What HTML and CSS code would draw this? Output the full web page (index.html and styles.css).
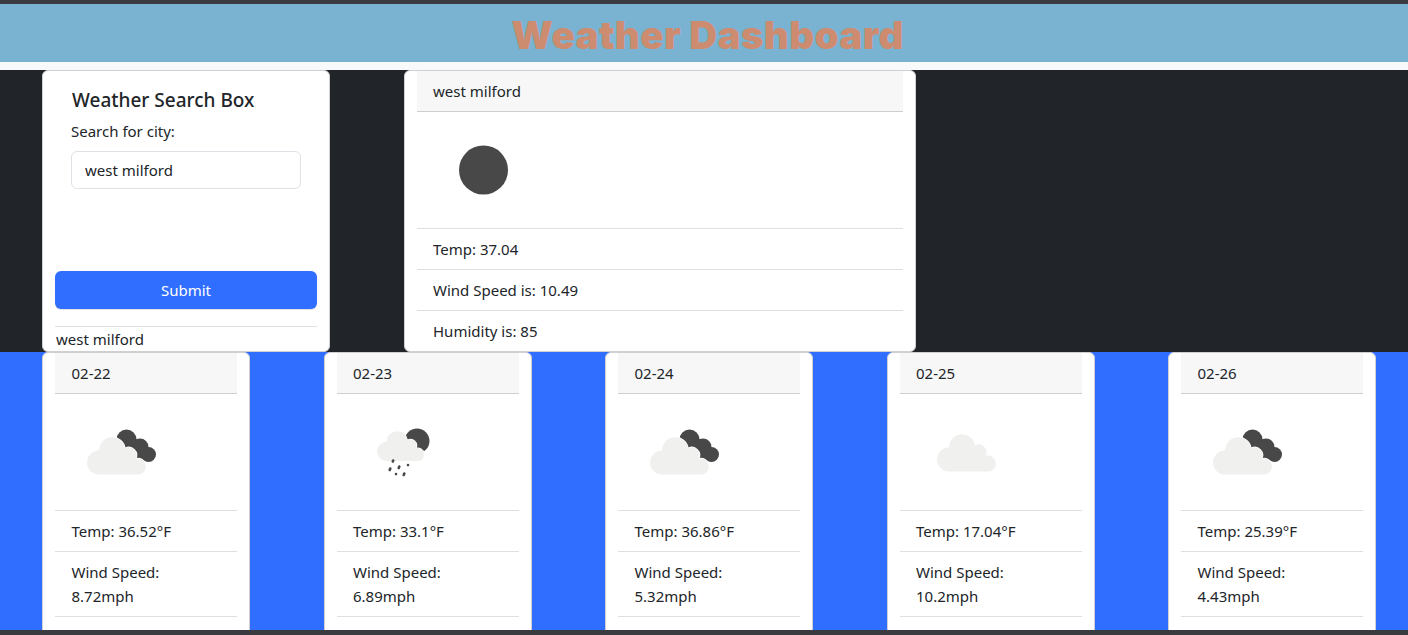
FILE: index.html
```html
<!DOCTYPE html>
<html lang="en">
<head>
    <meta charset="UTF-8">
    <meta name="viewport" content="width=device-width, initial-scale=1.0">
    <title>Weather Dashboard</title>
    <link rel="stylesheet" href="styles.css">
</head>
<body>

<svg class="defs" width="0" height="0">
    <defs>
        <path id="cloud" d="M33 69.5A12 12 0 0 1 33.1 45.5A13 13 0 0 1 59 43.7A7.5 7.5 0 0 1 69.4 53.9A8 8 0 1 1 72 69.5Z"/>
        <g id="cloudy">
            <circle class="dark" cx="55.5" cy="37.5" r="10"/>
            <circle class="dark" cx="69" cy="45" r="8.5"/>
            <circle class="dark" cx="77.5" cy="52.5" r="7.5"/>
            <circle class="dark" cx="62.5" cy="46" r="9"/>
            <circle class="dark" cx="70.5" cy="52" r="7"/>
            <use href="#cloud" class="light outlined" transform="translate(-5 3)"/>
        </g>
    </defs>
</svg>

<header class="title-bar">
    <h1>Weather Dashboard</h1>
</header>

<section class="top-row">
    <div class="card search-card">
        <h5>Weather Search Box</h5>
        <label for="city">Search for city:</label>
        <input type="text" id="city" value="west milford">
        <button>Submit</button>
        <div class="history">west milford</div>
    </div>

    <div class="card today-card">
        <div class="card-header">west milford</div>
        <svg class="weather-icon" viewBox="0 0 100 100">
            <circle class="dark" cx="50.5" cy="50" r="24.5"/>
        </svg>
        <ul>
            <li>Temp: 37.04</li>
            <li>Wind Speed is: 10.49</li>
            <li>Humidity is: 85</li>
        </ul>
    </div>
</section>

<section class="forecast-row">
    <div class="card">
        <div class="card-header">02-22</div>
        <svg class="weather-icon" viewBox="0 0 100 100"><use href="#cloudy"/></svg>
        <ul>
            <li>Temp: 36.52°F</li>
            <li>Wind Speed: 8.72mph</li>
        </ul>
    </div>
    <div class="card">
        <div class="card-header">02-23</div>
        <svg class="weather-icon" viewBox="0 0 100 100">
            <circle class="dark" cx="64" cy="39" r="12.5"/>
            <use href="#cloud" class="light outlined" transform="translate(7.2 3.4) scale(.8)"/>
            <path class="rain" d="M40.2 58.5l-.4 1M37.3 66.5l-.6 1.5M46.3 64.5l-.6 1.5M55 63l0 .1M43 72l0 .1M51.3 71.5l-.6 1.5"/>
        </svg>
        <ul>
            <li>Temp: 33.1°F</li>
            <li>Wind Speed: 6.89mph</li>
        </ul>
    </div>
    <div class="card">
        <div class="card-header">02-24</div>
        <svg class="weather-icon" viewBox="0 0 100 100"><use href="#cloudy"/></svg>
        <ul>
            <li>Temp: 36.86°F</li>
            <li>Wind Speed: 5.32mph</li>
        </ul>
    </div>
    <div class="card">
        <div class="card-header">02-25</div>
        <svg class="weather-icon" viewBox="0 0 100 100"><use href="#cloud" class="light"/></svg>
        <ul>
            <li>Temp: 17.04°F</li>
            <li>Wind Speed: 10.2mph</li>
        </ul>
    </div>
    <div class="card">
        <div class="card-header">02-26</div>
        <svg class="weather-icon" viewBox="0 0 100 100"><use href="#cloudy"/></svg>
        <ul>
            <li>Temp: 25.39°F</li>
            <li>Wind Speed: 4.43mph</li>
        </ul>
    </div>
</section>

</body>
</html>
```

FILE: styles.css
```css
* {
    box-sizing: border-box;
}

html, body {
    height: 100%;
    overflow: hidden;
}

body {
    margin: 0;
    display: flex;
    flex-direction: column;
    font-family: 'Noto Sans', 'Open Sans', sans-serif;
    font-size: 15px;
    line-height: 24px;
    color: #212529;
    background-color: #f8f9fa;
    border-top: 4px solid #3a3b3f;
    border-bottom: 5px solid #3a3b3f;
}

.defs {
    position: absolute;
}

.title-bar {
    height: 58px;
    flex: none;
    background-color: #7ab3d1;
    text-align: center;
}

h1 {
    margin: 0;
    padding-left: 7px;
    font-family: 'Inter', sans-serif;
    font-size: 38.5px;
    font-weight: 900;
    letter-spacing: .4px;
    line-height: 62px;
    color: #cd8b70;
}

.top-row {
    margin-top: 8px;
    height: 282px;
    flex: none;
    display: flex;
    gap: 74px;
    padding-left: 42px;
    background-color: #212529;
}

.forecast-row {
    flex: 1;
    min-height: 0;
    overflow: hidden;
    display: flex;
    justify-content: space-between;
    padding: 0 32px 0 42px;
    background-color: #306eff;
}

.card {
    width: 208px;
    flex: none;
    padding: 0 12px;
    background-color: #fff;
    border: 1px solid #d0d0d2;
    border-radius: 6px;
}

.forecast-row .card {
    height: 320px;
}

.forecast-row .card-header,
.forecast-row li {
    padding-left: 16.5px;
}

.search-card {
    width: 288px;
    height: 282px;
    display: flex;
    flex-direction: column;
}

.today-card {
    width: 512px;
    height: 282px;
}

h5 {
    margin: 17px 0 0 17px;
    font-size: 19px;
    font-weight: 500;
    line-height: 24px;
}

label {
    display: block;
    margin: 7px 0 8px 16px;
}

input {
    width: 230px;
    height: 38px;
    margin-left: 16px;
    padding: 0 13px;
    font: inherit;
    color: #212529;
    border: 1px solid #dee2e6;
    border-radius: 6px;
}

button {
    margin-top: 82px;
    height: 38px;
    flex: none;
    font: inherit;
    color: #fff;
    background-color: #306eff;
    border: none;
    border-radius: 6px;
    box-shadow: 0 1px 0 #dee2e6;
}

.history {
    margin-top: 17px;
    border-top: 1px solid #dee2e6;
    padding-left: 1px;
}

.card-header {
    height: 41px;
    padding: 8px 16px;
    background-color: #f7f7f7;
    border-bottom: 1px solid #cfcfcf;
}

.weather-icon {
    display: block;
    width: 100px;
    height: 100px;
    margin: 8px 16px;
}

.dark {
    fill: #484849;
}

.light {
    fill: #f0f0ee;
}

.outlined {
    stroke: #fff;
    stroke-width: 1.5;
    paint-order: stroke;
}

.rain {
    fill: none;
    stroke: #484849;
    stroke-width: 2.6;
    stroke-linecap: round;
}

ul {
    list-style-type: none;
    margin: 0;
    padding: 0;
}

li {
    padding: 8px 16px;
    border-top: 1px solid #dfdfdf;
}

.forecast-row li:last-child {
    border-bottom: 1px solid #dfdfdf;
}
```
